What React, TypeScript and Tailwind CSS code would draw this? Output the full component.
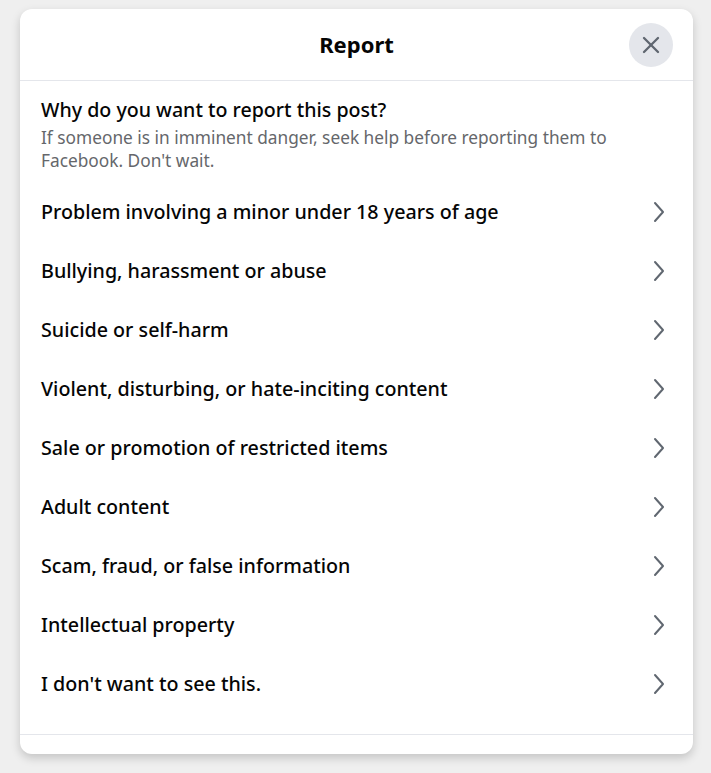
import { X } from 'lucide-react'

const reasons = [
  'Problem involving a minor under 18 years of age',
  'Bullying, harassment or abuse',
  'Suicide or self-harm',
  'Violent, disturbing, or hate-inciting content',
  'Sale or promotion of restricted items',
  'Adult content',
  'Scam, fraud, or false information',
  'Intellectual property',
  "I don't want to see this.",
]

function Chevron() {
  return (
    <svg width="14" height="24" viewBox="0 0 14 24" fill="none" aria-hidden>
      <path
        d="M3 3l8 9-8 9"
        stroke="#606770"
        strokeWidth="2"
        strokeLinecap="round"
        strokeLinejoin="round"
      />
    </svg>
  )
}

export default function App() {
  return (
    <div
      className="min-h-[773px] w-full bg-[#efefef] px-5 pt-[9px] pb-5"
      style={{ fontFamily: '"Noto Sans", "Open Sans", Arial, sans-serif' }}
    >
      <div className="flex w-[673px] flex-col rounded-xl bg-white shadow-[0_4px_10px_rgba(0,0,0,0.18)]">
        <div className="relative flex h-[72px] items-center justify-center border-b border-[#e4e6eb]">
          <h1 className="text-[22px] font-bold text-[#050505]">Report</h1>
          <button
            type="button"
            className="absolute right-[20px] top-[14px] flex h-[44px] w-[44px] items-center justify-center rounded-full bg-[#e4e6eb]"
          >
            <X className="h-[28px] w-[28px] text-[#606770]" strokeWidth={2} aria-hidden />
          </button>
        </div>
        <div className="px-[21px] pt-[15px]">
          <h2 className="text-[19.6px] leading-[28px] font-medium text-[#050505]">
            Why do you want to report this post?
          </h2>
          <p className="mt-[2px] text-[17.3px] leading-[23px] text-[#65676b]">
            If someone is in imminent danger, seek help before reporting them to
            Facebook. Don't wait.
          </p>
        </div>
        <ul className="pt-[10px] pb-[21px]">
          {reasons.map((r) => (
            <li
              key={r}
              className="flex h-[59px] items-center justify-between pl-[21px] pr-[27px]"
            >
              <span className="text-[19.7px] font-medium text-[#050505]">{r}</span>
              <Chevron />
            </li>
          ))}
        </ul>
        <div className="h-[20px] border-t border-[#e4e6eb]" />
      </div>
    </div>
  )
}
